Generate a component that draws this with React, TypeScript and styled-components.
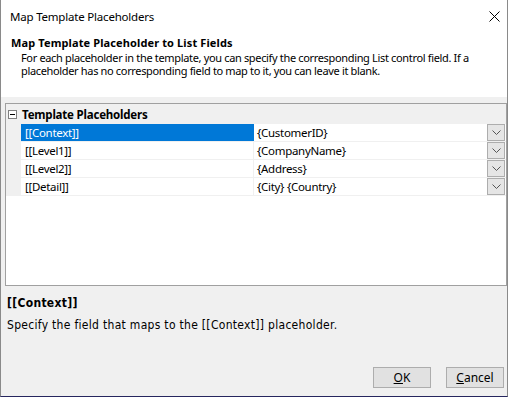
import styled, { createGlobalStyle } from "styled-components";

const GlobalStyle = createGlobalStyle`
  html, body {
    margin: 0;
    padding: 0;
    background: #ffffff;
  }
  body {
    font-family: "Noto Sans", "Open Sans", sans-serif;
    font-size: 12px;
    color: #000;
  }
`;

/* window chrome */
const Window = styled.div`
  width: 508px;
  height: 397px;
  box-sizing: border-box;
  border-left: 1px solid #8a8a8a;
  border-right: 1px solid #8a8a8a;
  border-bottom: 1px solid #26265e;
  background: #f0f0f0;
  display: flex;
  flex-direction: column;
`;

const TitleBar = styled.div`
  height: 31px;
  flex: none;
  background: #ffffff;
  display: flex;
  align-items: center;
  justify-content: space-between;
  padding: 1px 7px 0 9px;
  box-sizing: border-box;
  font-size: 11.5px;
  letter-spacing: -0.2px;
`;

const CloseButton = styled.svg`
  width: 11px;
  height: 11px;
`;

/* header */
const Header = styled.div`
  height: 66px;
  flex: none;
  background: #ffffff;
  padding: 5px 0 0 10px;
  box-sizing: border-box;
`;

const Heading = styled.div`
  font-weight: 700;
  font-size: 11px;
  line-height: 14px;
  letter-spacing: 0.12px;
`;

const Description = styled.div`
  margin: 2px 0 0 10px;
  font-size: 11px;
  line-height: 12.5px;
  letter-spacing: -0.34px;
  width: 470px;
`;

/* property grid */
const Body = styled.div`
  flex: 1;
  display: flex;
  flex-direction: column;
  padding: 6px 0 0 4px;
`;

const Grid = styled.div`
  width: 502px;
  height: 183px;
  box-sizing: border-box;
  border: 1px solid #a0a0a0;
  background: #ffffff;
  display: flex;
  flex-direction: column;
  font-size: 11.5px;
  letter-spacing: -0.3px;
`;

const CategoryRow = styled.div`
  height: 20px;
  flex: none;
  background: #f0f0f0;
  display: flex;
  align-items: center;
  font-weight: 700;
  font-size: 11.5px;
  letter-spacing: -0.2px;
`;

const ExpandBox = styled.div`
  width: 7px;
  height: 7px;
  border: 1px solid #808080;
  background: #ffffff;
  margin: 0 5px 0 2px;
  position: relative;
  &::after {
    content: "";
    position: absolute;
    left: 1px;
    top: 3px;
    width: 5px;
    height: 1px;
    background: #000;
  }
`;

const PropRow = styled.div`
  height: 18px;
  flex: none;
  display: flex;
  border-bottom: 1px solid #f0f0f0;
  box-sizing: border-box;
`;

const Margin = styled.div`
  width: 15px;
  flex: none;
  background: #f0f0f0;
`;

const NameCell = styled.div<{ $selected?: boolean }>`
  width: 233px;
  flex: none;
  padding-left: 4px;
  box-sizing: border-box;
  line-height: 17px;
  background: ${(p) => (p.$selected ? "#0078d7" : "#ffffff")};
  color: ${(p) => (p.$selected ? "#ffffff" : "#000000")};
  border-right: 1px solid ${(p) => (p.$selected ? "#0078d7" : "#f0f0f0")};
`;

const ValueCell = styled.div`
  flex: 1;
  display: flex;
  align-items: stretch;
  padding-left: 3px;
  line-height: 17px;
`;

const ValueText = styled.span`
  flex: 1;
`;

const DropButton = styled.div`
  width: 18px;
  height: 17px;
  box-sizing: border-box;
  border: 1px solid #adadad;
  background: #e5e5e5;
  margin-right: 1px;
  display: flex;
  align-items: center;
  justify-content: center;
`;

/* help pane */
const HelpTitle = styled.div`
  font-family: "DejaVu Sans Condensed", "DejaVu Sans", sans-serif;
  font-weight: 700;
  font-size: 12px;
  letter-spacing: 0.3px;
  margin: 10px 0 0 2px;
  line-height: 14px;
`;

const HelpText = styled.div`
  font-family: "DejaVu Sans Condensed", "DejaVu Sans", sans-serif;
  font-size: 12px;
  letter-spacing: 0.3px;
  margin: 8px 0 0 2px;
  line-height: 14px;
`;

/* buttons */
const Footer = styled.div`
  margin-top: auto;
  display: flex;
  justify-content: flex-end;
  gap: 15px;
  padding: 0 3px 8px 0;
`;

const Button = styled.button`
  width: 58px;
  height: 21px;
  box-sizing: border-box;
  border: 1px solid #adadad;
  background: #e1e1e1;
  font-family: "Noto Sans", sans-serif;
  font-size: 12px;
  color: #000;
  padding: 0;
  line-height: 18px;
`;

const rows = [
  { name: "[[Context]]", value: "{CustomerID}" },
  { name: "[[Level1]]", value: "{CompanyName}" },
  { name: "[[Level2]]", value: "{Address}" },
  { name: "[[Detail]]", value: "{City} {Country}" },
];

function Chevron() {
  return (
    <svg width="9" height="5" viewBox="0 0 9 5">
      <path d="M0.5 0.5 L4.5 4.5 L8.5 0.5" fill="none" stroke="#555" strokeWidth="1" />
    </svg>
  );
}

export default function App() {
  return (
    <>
      <GlobalStyle />
      <Window>
        <TitleBar>
          <span>Map Template Placeholders</span>
          <CloseButton viewBox="0 0 11 11">
            <path d="M0.5 0.5 L10.5 10.5 M10.5 0.5 L0.5 10.5" stroke="#000" strokeWidth="1" />
          </CloseButton>
        </TitleBar>

        <Header>
          <Heading>Map Template Placeholder to List Fields</Heading>
          <Description>
            For each placeholder in the template, you can specify the corresponding List control field. If a
            placeholder has no corresponding field to map to it, you can leave it blank.
          </Description>
        </Header>

        <Body>
          <Grid>
            <CategoryRow>
              <ExpandBox />
              Template Placeholders
            </CategoryRow>
            {rows.map((r, i) => (
              <PropRow key={r.name}>
                <Margin />
                <NameCell $selected={i === 0}>{r.name}</NameCell>
                <ValueCell>
                  <ValueText>{r.value}</ValueText>
                  <DropButton>
                    <Chevron />
                  </DropButton>
                </ValueCell>
              </PropRow>
            ))}
          </Grid>

          <HelpTitle>[[Context]]</HelpTitle>
          <HelpText>Specify the field that maps to the [[Context]] placeholder.</HelpText>

          <Footer>
            <Button><u>O</u>K</Button>
            <Button><u>C</u>ancel</Button>
          </Footer>
        </Body>
      </Window>
    </>
  );
}
